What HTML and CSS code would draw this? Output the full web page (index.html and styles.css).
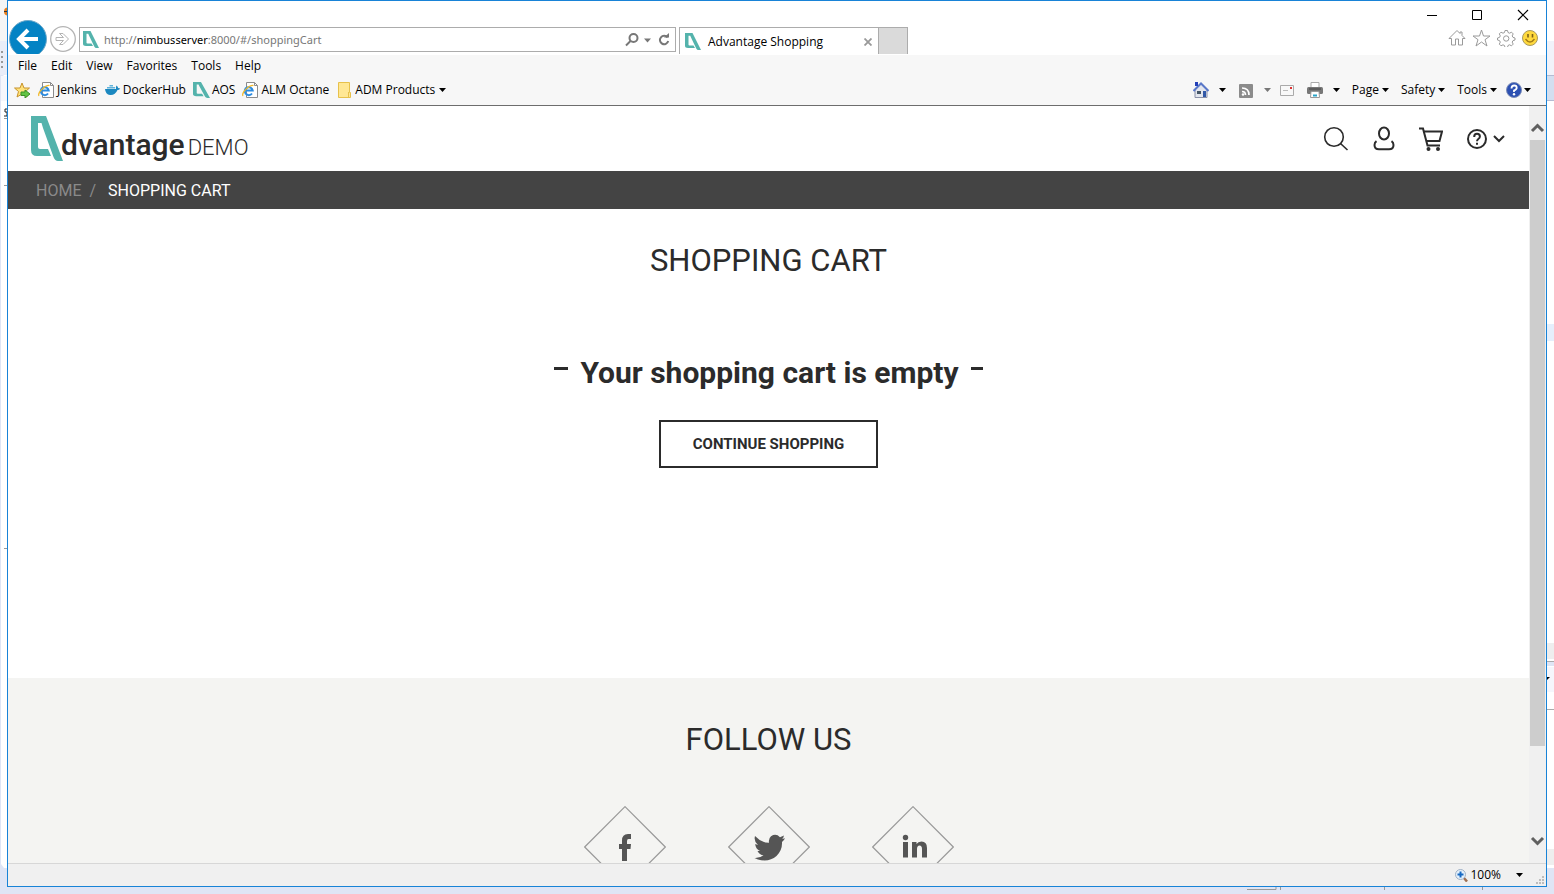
FILE: index.html
```html
<!DOCTYPE html>
<html lang="en">
<head>
<meta charset="utf-8">
<title>Advantage Shopping</title>
<link rel="stylesheet" href="styles.css">
</head>
<body>
<svg width="0" height="0" class="defs" aria-hidden="true">
  <symbol id="brand" viewBox="0 0 32 45" preserveAspectRatio="none"><path fill="#54b3ac" fill-rule="evenodd" d="M0 0h15L32 45H27Q24 45 22.500 41L12 12 10.500 7H7V31Q7 33 9 33H17L20 40H6Q0 40 0 34Z"/></symbol>
  <symbol id="ie" viewBox="0 0 17 16"><path d="M4.500 .5h8l3 3v12h-11z" fill="#fff" stroke="#8c8c8c"/><path d="M12.500 .5v3h3" fill="none" stroke="#8c8c8c"/><path d="M10 11.500A4 4 0 1 1 10.700 8.500H3.500" fill="none" stroke="#2b8be0" stroke-width="2"/><path d="M1 14C-1 11 7 3 11.500 3.500" fill="none" stroke="#f1b92b" stroke-width="1.200"/></symbol>
  <symbol id="caret" viewBox="0 0 7 4"><path d="M0 0h7L3.500 4z" fill="currentColor"/></symbol>
</svg>
<div class="desktop">
  <svg class="edge edge-left" aria-hidden="true"><rect width="7" height="894" fill="#dfe5f5"/><rect width="7" height="41" fill="#f5f5f5"/><rect y="41" width="7" height="34" fill="#e9edf8"/><path d="M1 78l3-3h3v793h-3l-3-4z" fill="#fff"/><rect x="1" y="76" width="6" height="25" fill="#f5f7fc"/><circle cx="8" cy="11.500" r="4" fill="#e87d1a"/><path d="M4 11.500h3" stroke="#333"/><path d="M2 51v2M2 56v2M2 61v2M2 66v2" stroke="#999" stroke-width="2"/><path d="M4 118.500h3M4 185.500h3M4 548.500h3" stroke="#999"/><path d="M7 109H5v3h2v4H4" fill="none" stroke="#222"/></svg>
  <div class="window">
    <header class="titlebar">
      <button class="back" aria-label="Back"><svg viewBox="0 0 38 38"><circle cx="19" cy="19" r="18.500" fill="#0483c4" stroke="#6fa9c9"/><path d="M29 19H11M19 10l-9 9 9 9" fill="none" stroke="#fff" stroke-width="4"/></svg></button>
      <button class="forward" aria-label="Forward"><svg viewBox="0 0 26 26"><circle cx="13" cy="13" r="12.300" fill="#fff" stroke="#b4b4b4" stroke-width="1.300"/><path d="M6 11.500h7.500L9.500 7.500h3.500l5.500 5.500-5.500 5.500H9.500l4-4H6z" fill="#fff" stroke="#b4b4b4"/></svg></button>
      <div class="address">
        <svg class="favicon"><use href="#brand"/></svg>
        <span class="url">http://<b>nimbusserver</b>:8000/#/shoppingCart</span>
        <svg class="addr-tools" viewBox="0 0 48 16"><circle cx="9.500" cy="6" r="4" fill="none" stroke="#777" stroke-width="2"/><path d="M6.500 9L2 13.500" stroke="#777" stroke-width="2"/><path d="M20 6.500h7l-3.500 4z" fill="#777"/><path d="M43.500 5.500A4.200 4.200 0 1 0 44.200 9" fill="none" stroke="#777" stroke-width="2"/><path d="M40 5.500h5V1z" fill="#777"/></svg>
      </div>
      <div class="tab"><svg class="favicon"><use href="#brand"/></svg><span>Advantage Shopping</span><button aria-label="Close tab"><svg viewBox="0 0 8 8"><path d="M.5.5l7 7M7.500.5l-7 7" stroke="#999" stroke-width="1.800"/></svg></button></div>
      <button class="new-tab" aria-label="New tab"></button>
      <div class="right-tools">
        <svg class="win-buttons" viewBox="0 0 104 14" fill="none" stroke="#000"><path d="M1 8.500h10"/><path d="M46.500 3.500h9v9h-9z"/><path d="M92 3l10 10M102 3L92 13" stroke-width="1.200"/></svg>
        <svg class="ie-tools" viewBox="0 0 90 18" fill="none" stroke="#9a9a9a"><path d="M1 9.500L9 1.500l3 3V3h2v3.500l3 3h-2.500V16h-4v-6h-3v6h-4V9.500z"/><path d="M33.500 1l2 6H42l-5 3.700 2 6.300-5.500-4-5.500 4 2-6.300-5-3.700h6.500z"/><path d="M57 1.500h2.500l.5 2 1.500.7 2-1 1.700 1.700-1 2 .8 1.500 2 .6v2l-2 .6-.8 1.500 1 2-1.700 1.700-2-1-1.500.7-.5 2H57l-.5-2-1.500-.7-2 1-1.700-1.700 1-2-.8-1.500-2-.6V9l2-.6.8-1.500-1-2L53 3.200l2 1 1.500-.7z"/><circle cx="58.200" cy="9.500" r="2.700"/><circle cx="82" cy="9" r="7.500" fill="#ffd93d" stroke="#a89960"/><path d="M80 5v3.500M84.500 5v3.500" stroke="#7d6218" stroke-width="1.600"/><path d="M77.500 10q4.500 6 9 0" stroke="#a37c18" stroke-width="1.400"/></svg>
      </div>
    </header>
    <nav class="menubar"><button>File</button><button>Edit</button><button>View</button><button>Favorites</button><button>Tools</button><button>Help</button></nav>
    <div class="toolbar">
      <nav class="favorites">
        <button aria-label="Add to favorites"><svg viewBox="0 0 17 16"><path d="M8 1l2 5h5.500l-4 3.500L13 15l-5-3-5 3 1.500-5.500-4-3.500H6z" fill="#ffe27a" stroke="#c7932c"/><path d="M7 10h4V8l5 4-5 4v-2.500H7z" fill="#62c443" stroke="#3b8f28"/></svg></button>
        <a href="#"><svg viewBox="0 0 17 16"><use href="#ie"/></svg>Jenkins</a>
        <a href="#"><svg viewBox="0 0 17 16"><path d="M1 7h11q-.5-2 .5-3.500 1.500 1 1.700 2.500 1 0 2 .4-.9 1.600-2.700 1.600Q11 13.500 6 13 1.500 12.500 1 7z" fill="#1b88c0"/><path d="M3 5.800h8M5.500 3.800h3.500" stroke="#5fb2da" stroke-width="1.600"/></svg>DockerHub</a>
        <a href="#"><svg><use href="#brand"/></svg>AOS</a>
        <a href="#"><svg viewBox="0 0 17 16"><use href="#ie"/></svg>ALM Octane</a>
        <a href="#"><svg viewBox="0 0 17 16"><path d="M2.500.5h11v10h1v5h-12z" fill="#ffe794" stroke="#e7c14b"/><path d="M12.500 15v-5" stroke="#e7c14b"/></svg>ADM Products<svg class="caret"><use href="#caret"/></svg></a>
      </nav>
      <nav class="commands">
        <button aria-label="Home"><svg viewBox="0 0 16 16"><path d="M2 8v7.500h12V8L8 2z" fill="#e3e6ee" stroke="#8990a8"/><path d="M.5 9L8 1.500 15.500 9" fill="none" stroke="#5a78c8" stroke-width="2"/><path d="M2 0h3v4H2z" fill="#2340b8"/><path d="M4 9h4v3H4z" fill="#456"/><path d="M10 9h3v6h-3z" fill="#3259a8"/></svg><svg class="caret"><use href="#caret"/></svg></button>
        <button class="feed" aria-label="Feeds"><svg viewBox="0 0 16 16"><rect x="1" y="2" width="14" height="14" rx="1" fill="#8b8b8b"/><path d="M4 6q7 0 7 7M4 9.500q3.500 0 3.500 3.500" fill="none" stroke="#fff" stroke-width="1.700"/><circle cx="5" cy="12.500" r="1.200" fill="#fff"/></svg><svg class="caret"><use href="#caret"/></svg></button>
        <button class="mail" aria-label="Read mail"><svg viewBox="0 0 16 16"><path d="M1.500 3.500h13v10h-13z" fill="#f8f8f8" stroke="#aaa"/><path d="M4 8.500h5" stroke="#bbb"/><path d="M11 5h2v2h-2z" fill="#d33"/></svg></button>
        <button aria-label="Print"><svg viewBox="0 0 16 16"><path d="M4 .5h8V6H4z" fill="#fff" stroke="#aaa"/><rect y="5" width="16" height="7" rx="1.500" fill="#777"/><path d="M2 7h12" stroke="#444"/><path d="M4 9.500h8l.5 6h-9z" fill="#fff" stroke="#999"/><path d="M6 13.500h4" stroke="#29a4c9" stroke-width="2"/></svg><svg class="caret"><use href="#caret"/></svg></button>
        <button>Page<svg class="caret"><use href="#caret"/></svg></button>
        <button>Safety<svg class="caret"><use href="#caret"/></svg></button>
        <button>Tools<svg class="caret"><use href="#caret"/></svg></button>
        <button class="help" aria-label="Help"><svg viewBox="0 0 16 16"><circle cx="8" cy="8" r="7.500" fill="#2c50b2" stroke="#7c8db8"/><path d="M5.500 6.500q0-3 2.700-3 2.500 0 2.500 2.200Q10.700 7.500 8 8.500V10" fill="none" stroke="#fff" stroke-width="1.800"/><circle cx="8" cy="12.200" r="1.200" fill="#fff"/></svg><svg class="caret"><use href="#caret"/></svg></button>
      </nav>
    </div>
    <div class="viewport">
      <div class="page">
        <header class="site-header">
          <a class="logo" href="#"><svg><use href="#brand"/></svg><strong>dvantage</strong><span>DEMO</span></a>
          <nav class="site-tools">
            <button aria-label="Search"><svg class="i-search" viewBox="0 0 26 26"><circle cx="11" cy="11" r="9.300"/><path d="M17.500 17.500L24.500 24"/></svg></button>
            <button aria-label="User"><svg class="i-user" viewBox="0 0 22 26"><ellipse cx="11" cy="7.500" rx="5" ry="6"/><path d="M3.500 15.200Q1.500 16.500 1.500 19 1.500 23.300 6 23.300H16Q20.500 23.300 20.500 19 20.500 16.500 18.500 15.200"/></svg></button>
            <button aria-label="Cart"><svg class="i-cart" viewBox="0 0 24 24"><path d="M0 1.500H4L8.500 18.500H21"/><path d="M4.500 4.500H23L20.500 14H7.500"/><circle cx="9.500" cy="22" r="1"/><circle cx="19" cy="22" r="1"/></svg></button>
            <button aria-label="Help"><svg class="i-help" viewBox="0 0 38 22"><circle cx="10" cy="11" r="9"/><path d="M7.200 9Q7.200 5.800 10 5.800 12.900 5.800 12.900 8.400 12.900 9.900 11.300 11 10 12 10 13.200M10 14.800v2"/><path d="M27 8l5 5 5-5"/></svg></button>
          </nav>
        </header>
        <nav class="crumbs"><a href="#">HOME</a><span>/</span><a class="current" href="#">SHOPPING CART</a></nav>
        <main>
          <h1>SHOPPING CART</h1>
          <p class="empty">Your shopping cart is empty</p>
          <button class="continue">CONTINUE SHOPPING</button>
        </main>
        <footer>
          <h2>FOLLOW US</h2>
          <div class="social">
            <a href="#" aria-label="Facebook"><svg viewBox="0 0 82 82"><path class="rim" d="M41 .7L81.300 41 41 81.300.7 41z"/><path d="M38 55V43h-3v-5h3v-3.500Q38 28 44 28h3v5h-2.500Q43 33 43 35v3h4l-.5 5H43v12z"/></svg></a>
            <a href="#" aria-label="Twitter"><svg viewBox="0 0 82 82"><path class="rim" d="M41 .7L81.300 41 41 81.300.7 41z"/><path d="M27 30Q33 36.500 41 36.800 40.300 32.500 43 30.300 48 27 52 31.300L56 29.500Q55.500 32 54 33L57 32.200Q56 34.500 54 36 54.500 44 48.500 50 41 56.500 30 53.500L26.500 52Q32 52.300 35.500 49.300 31.500 49 29.500 45H32Q27.500 43 27.200 38L30 39Q25.500 35 27 30z"/></svg></a>
            <a href="#" aria-label="LinkedIn"><svg viewBox="0 0 82 82"><path class="rim" d="M41 .7L81.300 41 41 81.300.7 41z"/><circle cx="33.500" cy="31.500" r="2.700"/><path d="M31 36h5v15.500h-5zM40 36h4.500v2Q46 35.500 49.500 35.500 55 35.500 55 42v9.500h-5V43Q50 39.500 47.500 39.500 45 39.500 45 43v8.500h-5z"/></svg></a>
          </div>
        </footer>
      </div>
      <div class="scrollbar" aria-hidden="true">
        <svg viewBox="0 0 15 34"><path d="M2 25l5.500-5.500L13 25" fill="none" stroke="#606060" stroke-width="3"/></svg>
        <div class="track"><div class="thumb"></div></div>
        <svg viewBox="0 0 15 34"><path d="M2 9l5.500 5.500L13 9" fill="none" stroke="#606060" stroke-width="3"/></svg>
      </div>
    </div>
    <div class="status">
      <button><svg class="zoom" viewBox="0 0 13 13"><path d="M8.500 8.500L12 12.500" stroke="#a07050" stroke-width="2.500"/><circle cx="5.500" cy="5.500" r="5" fill="#e4f0fb" stroke="#9fb0c4"/><path d="M5.500 2.500v6M2.500 5.500h6" stroke="#1769c2" stroke-width="2"/></svg>100%<svg class="caret"><use href="#caret"/></svg></button>
      <svg class="grip" viewBox="0 0 8 8" fill="#bdbdbd"><path d="M6 0h2v2H6zM3 3h2v2H3zM6 3h2v2H6zM0 6h2v2H0zM3 6h2v2H3zM6 6h2v2H6z"/></svg>
    </div>
  </div>
  <svg class="edge edge-right" aria-hidden="true"><rect width="7" height="894" fill="#fff"/><rect y="41" width="7" height="34" fill="#f1f3fa"/><rect y="75" width="7" height="25" fill="#d3dff0"/><path d="M0 75.500h7M0 100.500h7" stroke="#b4bbd2"/><rect y="324" width="7" height="17" fill="#e5effc"/><rect y="643" width="7" height="16" fill="#eee"/><rect y="662" width="7" height="4" fill="#dfe5f5"/><path d="M0 661.500h7M0 709.500h7" stroke="#aaa"/><rect y="667" width="7" height="25" fill="#f5f6fc"/><path d="M0 677h3l-3 3z"/><rect y="849" width="7" height="16" fill="#eee"/><rect y="868" width="7" height="26" fill="#dfe5f5"/></svg>
  <svg class="edge edge-bottom" aria-hidden="true"><path d="M1240 2.500h29v-2.500M1273.500 0v3M1377.500 0v3M1475.500 0v3" stroke="#999" fill="none"/></svg>
</div>
</body>
</html>
```
FILE: styles.css
```css
* { box-sizing: border-box; }
body { margin: 0; background: #dfe5f5; font-family: Roboto, "Liberation Sans", sans-serif; color: #2b2b2b; }
button { margin: 0; padding: 0; border: 0; background: none; font: inherit; color: inherit; }
a { color: inherit; text-decoration: none; }
svg { display: block; flex: none; }
.defs { position: absolute; }

.desktop { display: grid; grid-template: minmax(0, 1fr) 7px / 7px minmax(0, 1fr) 7px; height: 100vh; }
.edge { width: 100%; height: 100%; }
.edge-left, .edge-right { grid-row: 1 / 3; }
.edge-left { grid-column: 1; }
.edge-right { grid-column: 3; }
.edge-bottom { grid-area: 2 / 2; }
.window { grid-area: 1 / 2; display: flex; flex-direction: column; min-height: 0; border: 1px solid #1883d7; background: #fff; }

.titlebar, .menubar, .toolbar, .status { font-family: "Open Sans", "Noto Sans", sans-serif; font-size: 12px; line-height: 16px; color: #000; }
.titlebar { display: flex; align-items: flex-start; height: 53px; padding: 0 8px 0 1px; overflow: hidden; flex: none; }
.back { margin-top: 19px; }
.back svg { width: 38px; height: 38px; }
.forward { margin: 25px 3px 0; }
.forward svg { width: 26px; height: 26px; }
.address { display: flex; align-items: center; width: 597px; height: 25px; margin-top: 26px; border: 1px solid #acacac; color: #777; }
.address .favicon { margin: 0 5px 0 3px; }
.favicon { width: 16px; height: 17px; }
.url { flex: 1; font-family: "Noto Sans", "Open Sans", sans-serif; font-size: 11px; }
.url b { font-weight: 400; color: #000; }
.addr-tools { width: 48px; height: 16px; margin-right: 3px; }
.tab { display: flex; align-items: center; width: 200px; height: 28px; margin: 26px 0 0 3px; padding: 0 6px 0 5px; border: 1px solid #acacac; border-bottom: 0; }
.tab span { flex: 1; margin-left: 7px; }
.tab button svg { width: 8px; height: 8px; }
.new-tab { width: 29px; height: 27px; margin-top: 26px; border: 1px solid #acacac; border-width: 1px 1px 0 0; background: #dadada; }
.right-tools { display: flex; flex-direction: column; align-items: flex-end; gap: 8px; margin: 6px 0 0 auto; }
.win-buttons { width: 104px; height: 14px; margin-right: 8px; }
.ie-tools { width: 90px; height: 18px; }

.menubar { display: flex; align-items: center; gap: 14px; height: 23px; padding-left: 10px; border-top: 1px solid #fff; background: #f7f7f7; flex: none; }
.toolbar { display: flex; justify-content: space-between; height: 29px; padding: 0 15px 2px 6px; border-bottom: 1px solid #6d6d6d; background: #f7f7f7; flex: none; }
.favorites, .commands { display: flex; align-items: center; gap: 7px; }
.favorites a, .commands button { display: flex; align-items: center; gap: 2px; }
.favorites svg { width: 17px; height: 16px; }
.commands svg { width: 16px; height: 16px; }
.commands { gap: 12px; }
.commands button { gap: 3px; }
.commands button:nth-child(-n+4) { gap: 10px; }
.commands .feed { margin-right: -4px; }
.commands .help { gap: 2px; margin-left: -3px; }
.feed .caret { color: #777; }
.toolbar .caret, .status .caret { width: 7px; height: 4px; }
.favorites .caret { margin-left: 2px; }

.viewport { display: flex; flex: 1; min-height: 0; }
.page { flex: 1; overflow: hidden; }
.site-header { display: flex; justify-content: space-between; height: 65px; padding: 10px 24px 0 23px; }
.logo { display: flex; align-items: flex-start; }
.logo svg { width: 32px; height: 45px; }
.logo strong { margin: 10px 3px 0 -2px; font-size: 30px; font-weight: 500; line-height: 38px; }
.logo span { margin-top: 14px; font-size: 22px; font-weight: 300; line-height: 36px; }
.site-tools { display: flex; align-items: center; gap: 24px; height: 46px; }
.site-tools svg { fill: none; stroke: #2b2b2b; stroke-width: 2; }
.site-tools .i-search { width: 26px; height: 26px; stroke-width: 1.6; }
.i-user { width: 22px; height: 26px; }
.i-cart { width: 24px; height: 24px; }
.i-help { width: 38px; height: 22px; }
.crumbs { display: flex; align-items: center; height: 38px; padding: 1px 0 0 28px; background: #444; color: #fff; font-size: 16px; line-height: 24px; }
.crumbs a:first-child, .crumbs span { color: #8a8a8a; }
.crumbs span { margin: 0 12px 0 8px; }
main { display: flex; flex-direction: column; align-items: center; height: 469px; padding-top: 33px; }
h1, h2 { margin: 0; font-size: 31px; font-weight: 400; line-height: 38px; text-align: center; }
.empty { display: flex; align-items: center; gap: 12px; margin: 73px 0 28px; font-size: 30px; font-weight: 700; line-height: 39px; }
.empty::before, .empty::after { content: ""; width: 14px; height: 3px; margin-bottom: 8px; background: #2b2b2b; }
.empty::after { width: 12px; }
.continue { height: 48px; padding: 0 32px; border: 2px solid #2b2b2b; font-size: 15px; font-weight: 700; }
footer { height: 469px; padding-top: 43px; background: #f4f4f2; }
.social { display: flex; justify-content: center; gap: 62px; margin-top: 47px; }
.social svg { width: 82px; height: 82px; fill: #555; }
.social .rim { fill: none; stroke: #999; stroke-width: 1.2; }
.scrollbar { display: flex; flex-direction: column; width: 17px; padding: 0 1px; background: #f0f0f0; }
.scrollbar svg { width: 15px; height: 34px; }
.track { flex: 1; }
.thumb { height: 88%; background: #cdcdcd; }
.status { display: flex; align-items: center; justify-content: flex-end; height: 23px; border-top: 1px solid #d7d7d7; background: #f0f0f0; flex: none; }
.status button { display: flex; align-items: center; gap: 2px; }
.status .zoom { width: 13px; height: 13px; }
.status .caret { margin: 0 13px 0 13px; }
.grip { width: 8px; height: 8px; margin: 0 2px 2px 0; align-self: flex-end; }
```
